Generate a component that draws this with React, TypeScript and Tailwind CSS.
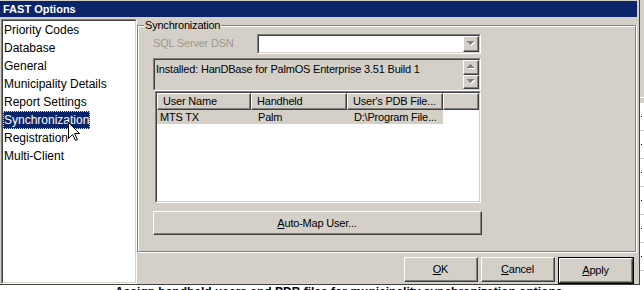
import type { ReactNode } from 'react';

const items = [
  'Priority Codes',
  'Database',
  'General',
  'Municipality Details',
  'Report Settings',
  'Synchronization',
  'Registration',
  'Multi-Client',
];

function Raised({ className = '', children }: { className?: string; children?: ReactNode }) {
  return (
    <div className={`border border-t-white border-l-white border-r-[#404040] border-b-[#404040] bg-[#d4d0c8] ${className}`}>
      <div className="flex h-full w-full items-center justify-center border-r border-b border-[#808080]">
        {children}
      </div>
    </div>
  );
}

function Sunken({ className = '', inner = '', children }: { className?: string; inner?: string; children?: ReactNode }) {
  return (
    <div className={`border border-t-[#808080] border-l-[#808080] border-r-white border-b-white ${className}`}>
      <div className={`h-full w-full border border-t-[#404040] border-l-[#404040] border-r-[#d4d0c8] border-b-[#d4d0c8] ${inner}`}>
        {children}
      </div>
    </div>
  );
}

// greyed-out arrow, drawn pixel by pixel like the classic theme
function Arrow({ up }: { up?: boolean }) {
  const rows = [0, 1, 2, 3];
  const rect = (i: number, dx: number, fill: string) =>
    up ? (
      <rect key={`${fill}${i}`} x={3 - i + dx} y={i + dx} width={1 + 2 * i} height={1} fill={fill} />
    ) : (
      <rect key={`${fill}${i}`} x={i + dx} y={i + dx} width={7 - 2 * i} height={1} fill={fill} />
    );
  return (
    <svg width="8" height="5" viewBox="0 0 8 5" shapeRendering="crispEdges">
      {rows.map((i) => rect(i, 1, '#ffffff'))}
      {rows.map((i) => rect(i, 0, '#808080'))}
    </svg>
  );
}

function Btn({ className = '', children }: { className?: string; children: ReactNode }) {
  return <Raised className={`h-[25px] w-[74px] ${className}`}>{children}</Raised>;
}

export default function App() {
  return (
    <div className="relative h-[290px] w-[644px] overflow-hidden bg-white font-['Liberation_Sans',Arial,sans-serif] text-[12px] leading-[14px] text-black">
      <div className="flex h-[285px]">
        {/* dialog window */}
        <div className="flex w-[640px] flex-col border-r border-b border-[#404040] bg-[#d4d0c8] pt-[1px]">
          <div className="mr-[2px] h-[16px] bg-[#0a246a] pl-[3px] pt-[1px] text-[11px] font-bold leading-[15px] text-white">
            FAST Options
          </div>

          <div className="mt-[2px] flex flex-1 pl-[1px]">
            <Sunken className="w-[136px]" inner="bg-white">
              {items.map((it) => (
                <div key={it} className="h-[18px] leading-[18px] whitespace-nowrap">
                  {it === 'Synchronization' ? (
                    <span className="inline-block h-[18px] border border-dotted border-[#e8e0a0] bg-[#0a246a] px-0 leading-[16px] text-white">
                      {it}
                    </span>
                  ) : (
                    <span className="px-[1px]">{it}</span>
                  )}
                </div>
              ))}
            </Sunken>

            <div className="flex flex-1 flex-col text-[11px] tracking-[-0.2px] whitespace-nowrap">
              {/* group box */}
              <div className="relative mt-[6px] w-[500px] border-r border-b border-white">
                <div className="border border-[#808080]">
                  <div className="h-[225px] border-t border-l border-white">
                    <div className="mt-[7px] flex h-[20px] pl-[14px]">
                      <div className="w-[104px] pt-[2px] text-[#9a9792]">SQL Server DSN</div>
                      <Sunken className="w-[224px]" inner="flex justify-end bg-white">
                        <Raised className="h-full w-[16px]">
                          <Arrow />
                        </Raised>
                      </Sunken>
                    </div>

                    <Sunken className="mt-[4px] ml-[14px] h-[33px] w-[328px]" inner="flex">
                      <div className="flex-1 pl-[1px] pt-[2px]">
                        Installed: HanDBase for PalmOS Enterprise 3.51 Build 1
                      </div>
                      <div className="flex w-[16px] flex-col">
                        <Raised className="flex-1">
                          <Arrow up />
                        </Raised>
                        <Raised className="flex-1">
                          <Arrow />
                        </Raised>
                      </div>
                    </Sunken>

                    <Sunken className="ml-[16px] h-[112px] w-[326px]" inner="bg-white">
                      <div className="flex h-[17px]">
                        <Raised className="w-[94px]">
                          <span className="w-full pl-[5px]">User Name</span>
                        </Raised>
                        <Raised className="w-[96px]">
                          <span className="w-full pl-[5px]">Handheld</span>
                        </Raised>
                        <Raised className="w-[96px]">
                          <span className="w-full pl-[5px]">User&apos;s PDB File...</span>
                        </Raised>
                        <Raised className="flex-1" />
                      </div>
                      <div className="flex h-[14px] w-[286px] bg-[#d4d0c8] leading-[15px]">
                        <div className="w-[94px] pl-[3px]">MTS TX</div>
                        <div className="w-[96px] pl-[7px]">Palm</div>
                        <div className="w-[96px] pl-[7px]">D:\Program File...</div>
                      </div>
                    </Sunken>

                    <Raised className="mt-[8px] ml-[14px] h-[24px] w-[329px]">
                      <span>
                        <u className="underline-offset-[1px]">A</u>uto-Map User...
                      </span>
                    </Raised>
                  </div>
                </div>
                <span className="absolute -top-[7px] left-[7px] bg-[#d4d0c8] px-[1px]">Synchronization</span>
              </div>

              <div className="flex justify-end gap-[3px] pt-[4px] pr-[5px]">
                <Btn>
                  <span>
                    <u className="underline-offset-[1px]">O</u>K
                  </span>
                </Btn>
                <Btn>
                  <span>
                    <u className="underline-offset-[1px]">C</u>ancel
                  </span>
                </Btn>
                <div className="border border-black">
                  <Btn className="h-[23px] w-[72px]">
                    <span>
                      <u className="underline-offset-[1px]">A</u>pply
                    </span>
                  </Btn>
                </div>
              </div>
            </div>
          </div>
        </div>

        {/* sliver of the app behind */}
        <div className="flex w-[4px] flex-col">
          <div className="h-[97px] bg-[#d4d0c8]" />
          <div className="h-[6px] border-t border-white bg-[#d4d0c8]" />
          {[0, 1, 2, 3, 4, 5].map((i) => (
            <div key={i} className="flex h-[28px] items-center border-b border-[#c8c8c8] bg-white pl-[1px]">
              <span className="h-[1px] w-[1px] bg-black" />
            </div>
          ))}
        </div>
      </div>

      <div className="h-[5px] overflow-hidden pt-[1px] pl-[115px] text-[12px] leading-[12px] font-bold whitespace-nowrap">
        Assign handheld users and PDB files for municipality synchronization options
      </div>

      {/* mouse pointer */}
      <svg className="absolute top-[122px] left-[68px]" width="13" height="20" viewBox="0 0 13 20">
        <path d="M0.5 0.5V16.5L4.5 12.5L7.5 18.5L9.5 17.5L6.5 11.5H11.5Z" fill="#fff" stroke="#000" strokeWidth="1" />
      </svg>
    </div>
  );
}
